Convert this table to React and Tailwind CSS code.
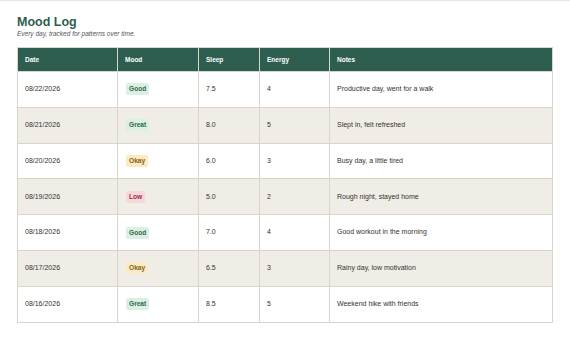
import React from 'react';

const entries = [
  { date: '08/22/2026', mood: 'Good', sleep: '7.5', energy: '4', notes: 'Productive day, went for a walk' },
  { date: '08/21/2026', mood: 'Great', sleep: '8.0', energy: '5', notes: 'Slept in, felt refreshed' },
  { date: '08/20/2026', mood: 'Okay', sleep: '6.0', energy: '3', notes: 'Busy day, a little tired' },
  { date: '08/19/2026', mood: 'Low', sleep: '5.0', energy: '2', notes: 'Rough night, stayed home' },
  { date: '08/18/2026', mood: 'Good', sleep: '7.0', energy: '4', notes: 'Good workout in the morning' },
  { date: '08/17/2026', mood: 'Okay', sleep: '6.5', energy: '3', notes: 'Rainy day, low motivation' },
  { date: '08/16/2026', mood: 'Great', sleep: '8.5', energy: '5', notes: 'Weekend hike with friends' },
];

const moodStyles = {
  Good: 'bg-[#dcefe4] text-[#2e6a4a]',
  Great: 'bg-[#dcefe4] text-[#2e6a4a]',
  Okay: 'bg-[#fbeac3] text-[#85621b]',
  Low: 'bg-[#f8d7dc] text-[#9b2f3f]',
};

const MoodBadge = ({ mood }) => (
  <span className={`inline-block px-[3px] py-[2px] rounded-[2px] text-[6.6px] font-bold leading-[8px] ${moodStyles[mood]}`}>
    {mood}
  </span>
);

const App = () => {
  return (
    <div className="min-h-screen bg-white border-t border-[#e6e6e6] font-['Liberation_Sans',Arial,sans-serif]">
      <div className="px-[17px] pt-[14px]">
        <h1 className="text-[12.5px] font-bold leading-[15px] text-[#2d5e4f]">Mood Log</h1>
        <p className="text-[6.5px] italic text-[#555] leading-[7px] mb-[10px]">Every day, tracked for patterns over time.</p>

        <table className="w-[536px] table-fixed border-collapse text-[7px] text-[#333]">
          <colgroup>
            <col className="w-[100px]" />
            <col className="w-[81px]" />
            <col className="w-[61px]" />
            <col className="w-[70px]" />
            <col />
          </colgroup>
          <thead>
            <tr className="bg-[#2d5e4f] text-white h-[24px] text-[6.5px]">
              {['Date', 'Mood', 'Sleep', 'Energy', 'Notes'].map((h) => (
                <th key={h} className="text-left font-bold px-[7px] border border-[#d9d5cb] border-b-0">
                  {h}
                </th>
              ))}
            </tr>
          </thead>
          <tbody>
            {entries.map((e, i) => (
              <tr key={e.date} className={`h-[35.8px] ${i % 2 === 1 ? 'bg-[#f0ede6]' : 'bg-white'}`}>
                <td className="px-[7px] border border-[#d9d5cb]">{e.date}</td>
                <td className="px-[8px] border border-[#d9d5cb]"><MoodBadge mood={e.mood} /></td>
                <td className="px-[7px] border border-[#d9d5cb]">{e.sleep}</td>
                <td className="px-[7px] border border-[#d9d5cb]">{e.energy}</td>
                <td className="px-[7px] border border-[#d9d5cb]">{e.notes}</td>
              </tr>
            ))}
          </tbody>
        </table>
      </div>
    </div>
  );
};

export default App;
